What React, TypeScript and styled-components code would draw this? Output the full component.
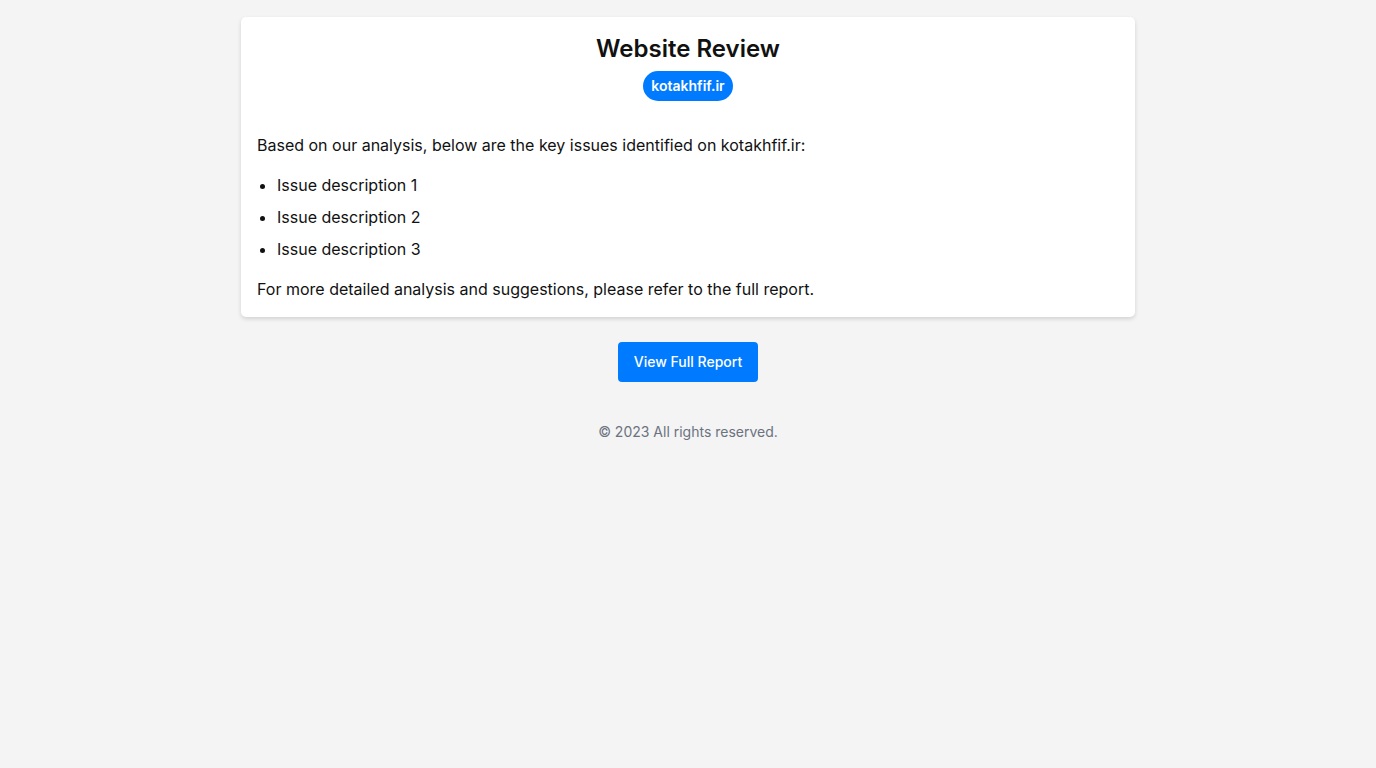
import React from "react";
import styled, { createGlobalStyle } from "styled-components";

const Global = createGlobalStyle`
  html, body { margin: 0; padding: 0; background: #f4f4f4; }
  body { font-family: Inter, "Noto Sans", sans-serif; color: #111111; }
  * { box-sizing: border-box; }
`;

const Page = styled.div`
  display: flex;
  flex-direction: column;
  align-items: center;
  padding-top: 17px;
`;

const Card = styled.section`
  width: 894px;
  background: #ffffff;
  border-radius: 5px;
  box-shadow: 0 2px 4px rgba(0, 0, 0, 0.14);
  padding: 16px;
`;

const Header = styled.header`
  display: flex;
  flex-direction: column;
  align-items: center;
  gap: 6px;
  margin-bottom: 32px;
`;

const Title = styled.h1`
  margin: 0;
  font-size: 24px;
  line-height: 32px;
  font-weight: 600;
  color: #111111;
`;

const Badge = styled.span`
  background: #007bff;
  color: #ffffff;
  font-size: 14px;
  font-weight: 600;
  line-height: 22px;
  padding: 4px 8px;
  border-radius: 999px;
`;

const Text = styled.p`
  margin: 0;
  font-size: 16px;
  line-height: 24px;
`;

const List = styled.ul`
  margin: 16px 0;
  padding-left: 20px;
  display: flex;
  flex-direction: column;
  gap: 8px;
`;

const Item = styled.li`
  font-size: 16px;
  line-height: 24px;
`;

const Button = styled.button`
  margin-top: 25px;
  background: #007bff;
  color: #ffffff;
  border: none;
  border-radius: 4px;
  font-family: inherit;
  font-size: 14px;
  font-weight: 500;
  line-height: 20px;
  padding: 10px 16px;
  cursor: pointer;
`;

const Footer = styled.footer`
  margin-top: 40px;
  font-size: 14px;
  line-height: 20px;
  color: #6b7280;
`;

export default function App() {
  const issues = ["Issue description 1", "Issue description 2", "Issue description 3"];
  return (
    <>
      <Global />
      <Page>
        <Card>
          <Header>
            <Title>Website Review</Title>
            <Badge>kotakhfif.ir</Badge>
          </Header>
          <Text>Based on our analysis, below are the key issues identified on kotakhfif.ir:</Text>
          <List>
            {issues.map((i) => (
              <Item key={i}>{i}</Item>
            ))}
          </List>
          <Text>For more detailed analysis and suggestions, please refer to the full report.</Text>
        </Card>
        <Button>View Full Report</Button>
        <Footer>© 2023 All rights reserved.</Footer>
      </Page>
    </>
  );
}
